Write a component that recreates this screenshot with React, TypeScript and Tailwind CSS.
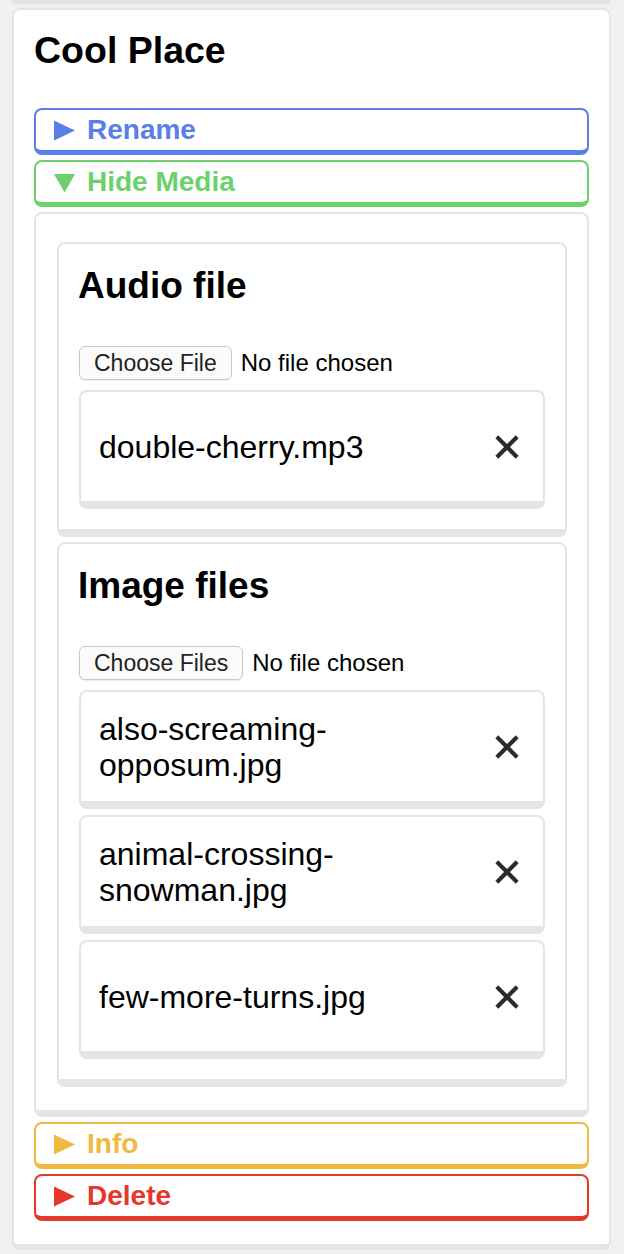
import React from 'react';

type Tone = 'blue' | 'green' | 'amber' | 'red';

const toneClasses: Record<Tone, string> = {
  blue: 'border-[#5a7fe8] text-[#5a7fe8]',
  green: 'border-[#6bd16d] text-[#6bd16d]',
  amber: 'border-[#f0b942] text-[#f0b942]',
  red: 'border-[#e6372b] text-[#e6372b]',
};

const Triangle: React.FC<{ open?: boolean }> = ({ open }) => (
  <svg width="21" height="21" viewBox="0 0 20 20" className="shrink-0" fill="currentColor">
    {open ? <polygon points="0,2 20,2 10,19.5" /> : <polygon points="0,0.5 20,10 0,19.5" />}
  </svg>
);

const Summary: React.FC<{ tone: Tone; label: string; open?: boolean }> = ({ tone, label, open }) => (
  <div
    className={`flex h-[47px] items-center gap-[12px] rounded-lg border-2 border-b-[5px] bg-white pl-[18px] text-[28px] font-bold leading-[40px] ${toneClasses[tone]}`}
  >
    <Triangle open={open} />
    <span>{label}</span>
  </div>
);

const CloseIcon = () => (
  <svg width="28" height="28" viewBox="0 0 24 24" fill="none" stroke="#2b2b2b" strokeWidth="3.5" strokeLinecap="square">
    <path d="M4.5 4.5 19.5 19.5" />
    <path d="M19.5 4.5 4.5 19.5" />
  </svg>
);

const FileItem: React.FC<{ name: string }> = ({ name }) => (
  <div className="flex min-h-[119px] items-center rounded-lg border-2 border-b-[8px] border-[#e3e5e9] bg-white pl-[18px] pr-[22px]">
    <p className="flex-1 pr-[60px] text-[32px] leading-[36px] text-black">{name}</p>
    <CloseIcon />
  </div>
);

const FilePicker: React.FC<{ label: string }> = ({ label }) => (
  <div className="flex h-[34px] items-center gap-[9px] leading-[32px]">
    <div className="flex h-[34px] items-center rounded-md border border-[#c9c9cc] bg-[#fbfbfb] px-[14px] text-[23px] text-[#222] shadow-[0_1px_1px_rgba(0,0,0,0.08)]">
      {label}
    </div>
    <span className="text-[24px] text-black">No file chosen</span>
  </div>
);

const MediaCard: React.FC<{ title: string; picker: string; files: string[] }> = ({ title, picker, files }) => (
  <section className="rounded-lg border-2 border-b-[8px] border-[#e3e5e9] bg-white pb-[20px] pl-[19px] pr-[20px] pt-[20px]">
    <h2 className="text-[37px] font-bold leading-[44px] text-black">{title}</h2>
    <div className="mt-[38px] pl-px">
      <FilePicker label={picker} />
    </div>
    <div className="mt-[10px] flex flex-col gap-[6px] pl-px">
      {files.map((f) => (
        <FileItem key={f} name={f} />
      ))}
    </div>
  </section>
);

export default function App() {
  return (
    <div className="min-h-[1254px] bg-[#eff1f3] font-['Liberation_Sans',Arial,sans-serif]">
      <div className="ml-[12px] mr-[13px] h-[4px] rounded-b-lg bg-[#e1e3e7]" />
      <main className="ml-[12px] mr-[13px] mt-[4px] rounded-lg border-2 border-b-[6px] border-[#e3e5e9] bg-white px-[20px] pb-[23px] pt-[18px]">
        <h1 className="text-[37.5px] font-bold leading-[44px] text-black">Cool Place</h1>
        <div className="mt-[36px] flex flex-col gap-[5px]">
          <Summary tone="blue" label="Rename" />
          <Summary tone="green" label="Hide Media" open />
          <div className="flex flex-col gap-[5px] rounded-lg border-2 border-b-[7px] border-[#e3e5e9] bg-white pb-[23px] pl-[21px] pr-[20px] pt-[28px]">
            <MediaCard title="Audio file" picker="Choose File" files={['double-cherry.mp3']} />
            <MediaCard
              title="Image files"
              picker="Choose Files"
              files={['also-screaming-opposum.jpg', 'animal-crossing-snowman.jpg', 'few-more-turns.jpg']}
            />
          </div>
          <Summary tone="amber" label="Info" />
          <Summary tone="red" label="Delete" />
        </div>
      </main>
    </div>
  );
}
